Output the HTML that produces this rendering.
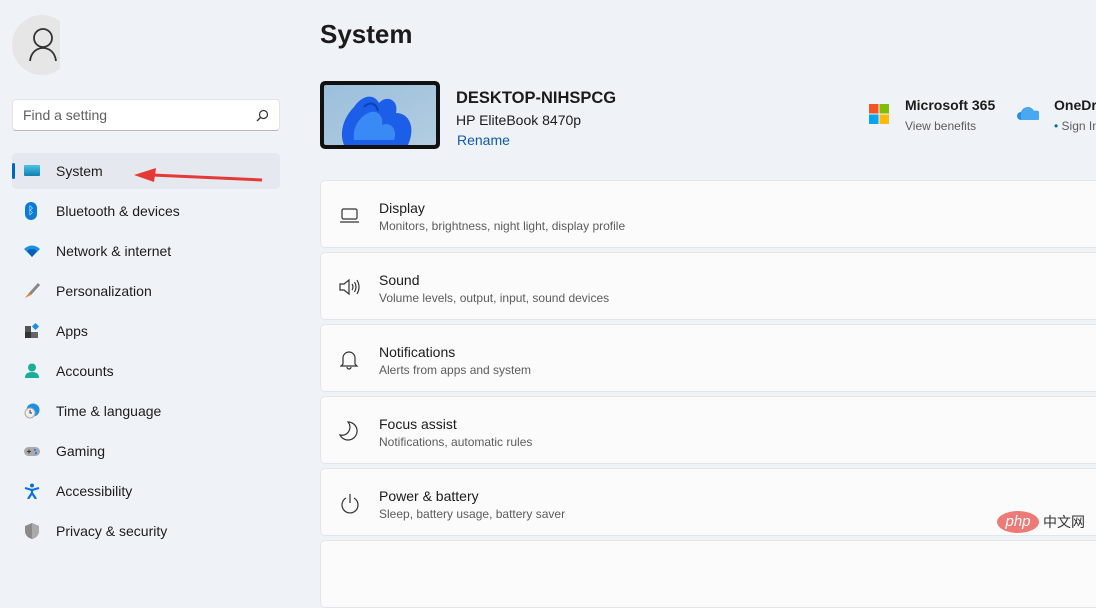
<!DOCTYPE html>
<html><head><meta charset="utf-8"><style>
*{margin:0;padding:0;box-sizing:border-box}
body{width:1096px;height:554px;overflow:hidden;background:#eff3f8;font-family:"Liberation Sans","Noto Sans CJK SC",sans-serif;color:#1b1b1b;position:relative}
.abs{position:absolute}
.avatar{left:12px;top:15px;width:48px;height:60px;overflow:hidden}
.avatar div{width:60px;height:60px;border-radius:50%;background:#e6e6e6}
.search{left:12px;top:99px;width:268px;height:32px;background:#fff;border:1px solid #e3e3e3;border-bottom-color:#b8b8b8;border-radius:4px;font-size:14px;color:#5f5f5f;padding:7px 10px}
.nav{left:12px;width:268px;height:36px;font-size:14px;color:#1b1b1b}
.nav span{position:absolute;left:44px;top:10px}
.nav .ic{position:absolute;left:12px;top:10px;width:16px;height:16px}
.sel{background:#e5e9ef;border-radius:5px}
.card{left:320px;width:800px;height:68px;background:#fbfbfc;border:1px solid #e3e5e8;border-radius:5px}
.card .t{position:absolute;left:58px;top:19px;font-size:14px;color:#1b1b1b}
.card .s{position:absolute;left:58px;top:38px;font-size:12px;color:#5c5c5c}
.card svg{position:absolute;left:18px;top:24px}
</style></head><body>
<div class="abs avatar"><div></div><svg class="abs" style="left:0;top:0" width="60" height="60"><circle cx="31" cy="23" r="9" fill="none" stroke="#333" stroke-width="1.8"/><path d="M18 46c1-9 7-13 13-13s12 4 13 13" fill="none" stroke="#333" stroke-width="1.8"/></svg></div>
<div class="abs search">Find a setting<svg class="abs" style="right:10px;top:9px" width="14" height="14"><circle cx="8.5" cy="5.5" r="4" fill="none" stroke="#333" stroke-width="1.2"/><path d="M5.5 8.5L2 12" stroke="#333" stroke-width="1.3"/></svg></div>

<div class="abs nav sel" style="top:153px"><div class="abs" style="left:0;top:10px;width:3px;height:16px;background:#0067c0;border-radius:2px"></div><div class="ic" style="top:12px;height:11px;background:linear-gradient(#4cc3e6,#0f7fae);border-radius:1px"></div><span>System</span></div>
<svg class="abs" style="left:130px;top:165px" width="135" height="20"><path d="M132 15L22 10" stroke="#e53935" stroke-width="3"/><path d="M4 10L26 3L24 17Z" fill="#e53935"/></svg>

<div class="abs nav" style="top:193px"><div class="ic" style="left:13px;width:12px;height:18px;top:9px;background:#0a7bd9;border-radius:6px;color:#fff;font-size:11px;text-align:center;line-height:18px">ᛒ</div><span>Bluetooth &amp; devices</span></div>
<div class="abs nav" style="top:233px"><svg class="ic" viewBox="0 0 16 16"><path d="M0 6Q8 -1 16 6L8 14Z" fill="#1a8fe3"/><path d="M3 8Q8 4 13 8L8 14Z" fill="#0a5fb5"/></svg><span>Network &amp; internet</span></div>
<div class="abs nav" style="top:273px"><svg class="ic" viewBox="0 0 16 16"><path d="M15 1L6 11" stroke="#888" stroke-width="3"/><path d="M5 10L1 15L7 12Z" fill="#f27a1a"/></svg><span>Personalization</span></div>
<div class="abs nav" style="top:313px"><svg class="ic" viewBox="0 0 16 16"><rect x="1" y="3" width="6" height="6" fill="#555"/><rect x="1" y="9" width="6" height="6" fill="#333"/><rect x="7" y="9" width="7" height="6" fill="#666"/><rect x="9" y="1" width="5" height="5" fill="#1a8fe3" transform="rotate(45 11.5 3.5)"/></svg><span>Apps</span></div>
<div class="abs nav" style="top:353px"><svg class="ic" viewBox="0 0 16 16"><circle cx="8" cy="4.5" r="4" fill="#1aad9a"/><path d="M1 15q0-6 7-6t7 6z" fill="#1aad9a"/></svg><span>Accounts</span></div>
<div class="abs nav" style="top:393px"><svg class="ic" viewBox="0 0 16 16"><circle cx="9" cy="7" r="6.5" fill="#1a8fe3"/><circle cx="6" cy="10" r="5" fill="#eee" stroke="#aaa"/><path d="M6 7v3h2" stroke="#333" fill="none"/></svg><span>Time &amp; language</span></div>
<div class="abs nav" style="top:433px"><svg class="ic" viewBox="0 0 16 16"><rect x="0" y="4" width="16" height="9" rx="4.5" fill="#aaa"/><path d="M3 8.5h4M5 6.5v4" stroke="#333"/><circle cx="11" cy="7" r="1" fill="#1a6fe3"/><circle cx="12" cy="10" r="1" fill="#1a6fe3"/></svg><span>Gaming</span></div>
<div class="abs nav" style="top:473px"><svg class="ic" viewBox="0 0 16 16"><circle cx="8" cy="2.5" r="2" fill="#0a74d6"/><path d="M1 5l7 2 7-2M8 7v3l-4 6M8 10l4 6" stroke="#0a74d6" stroke-width="2.2" fill="none"/></svg><span>Accessibility</span></div>
<div class="abs nav" style="top:513px"><svg class="ic" viewBox="0 0 16 16"><path d="M8 0L15 3v5c0 4-3 7-7 8C4 15 1 12 1 8V3z" fill="#8a8a8a"/><path d="M8 0L15 3v5c0 4-3 7-7 8z" fill="#aaa"/></svg><span>Privacy &amp; security</span></div>

<div class="abs" style="left:320px;top:19px;font-size:26px;font-weight:600">System</div>
<div class="abs" style="left:320px;top:81px;width:120px;height:68px;background:#111;border-radius:5px;padding:4px"><svg width="112" height="60" style="display:block;border-radius:2px"><defs><linearGradient id="bg" x1="0" y1="0" x2="1" y2="1"><stop offset="0" stop-color="#9bbfdc"/><stop offset="1" stop-color="#b3cde0"/></linearGradient></defs><rect width="112" height="60" fill="url(#bg)"/><path d="M20 60C14 45 22 30 30 22C38 10 50 8 55 18C62 10 75 14 72 28C85 28 92 42 84 60Z" fill="#1d5ee8"/><path d="M30 55C28 42 36 32 44 28C52 24 60 30 58 40C66 36 74 44 70 55Z" fill="#3a8af5"/><path d="M40 22C46 16 52 18 54 26" stroke="#0f3fb5" stroke-width="2" fill="none"/></svg></div>
<div class="abs" style="left:456px;top:89px;font-size:16.5px;font-weight:700">DESKTOP-NIHSPCG</div>
<div class="abs" style="left:456px;top:112px;font-size:14px">HP EliteBook 8470p</div>
<div class="abs" style="left:457px;top:132px;font-size:14px;color:#0f5ab0">Rename</div>

<svg class="abs" style="left:869px;top:104px" width="20" height="20"><rect width="9.5" height="9.5" fill="#f35325"/><rect x="10.5" width="9.5" height="9.5" fill="#81bc06"/><rect y="10.5" width="9.5" height="9.5" fill="#05a6f0"/><rect x="10.5" y="10.5" width="9.5" height="9.5" fill="#ffba08"/></svg>
<div class="abs" style="left:905px;top:97px;font-size:14px;font-weight:700">Microsoft 365</div>
<div class="abs" style="left:905px;top:119px;font-size:12px;color:#5c5c5c">View benefits</div>
<svg class="abs" style="left:1017px;top:106px" width="22" height="14"><path d="M4 14a4 4 0 0 1 0-8a7 7 0 0 1 13-1a5 5 0 0 1 1 9z" fill="#2a8ee0"/><path d="M4 9a7 7 0 0 1 13-4a4.5 4.5 0 0 1 4 9H4z" fill="#49a8ef"/></svg>
<div class="abs" style="left:1054px;top:97px;font-size:14px;font-weight:700;white-space:nowrap">OneDrive</div>
<div class="abs" style="left:1054px;top:119px;font-size:12px;color:#5c5c5c;white-space:nowrap"><span style="color:#0067c0">•</span> Sign In</div>

<div class="abs card" style="top:180px"><svg width="20" height="20"><rect x="3" y="4" width="15" height="10" rx="1.5" fill="none" stroke="#333" stroke-width="1.2"/><path d="M1 17h19" stroke="#333" stroke-width="1.2"/></svg><div class="t">Display</div><div class="s">Monitors, brightness, night light, display profile</div></div>
<div class="abs card" style="top:252px"><svg width="22" height="20"><path d="M1 7h4l5-4v14l-5-4H1z" fill="none" stroke="#333" stroke-width="1.2"/><path d="M13 7q2 3 0 6M15.5 5q3 5 0 10M18 3q4 7 0 14" fill="none" stroke="#333" stroke-width="1.2"/></svg><div class="t">Sound</div><div class="s">Volume levels, output, input, sound devices</div></div>
<div class="abs card" style="top:324px"><svg width="20" height="22"><path d="M4 15V9a6 6 0 0 1 12 0v6l2 2H2z" fill="none" stroke="#333" stroke-width="1.2"/><path d="M8 18a2 2 0 0 0 4 0" fill="none" stroke="#333" stroke-width="1.2"/></svg><div class="t">Notifications</div><div class="s">Alerts from apps and system</div></div>
<div class="abs card" style="top:396px"><svg width="20" height="22"><path d="M9 1a9 9 0 1 1-8 13a8 8 0 0 0 8-13z" fill="none" stroke="#333" stroke-width="1.2"/></svg><div class="t">Focus assist</div><div class="s">Notifications, automatic rules</div></div>
<div class="abs card" style="top:468px"><svg width="22" height="22"><path d="M7 5a8 8 0 1 0 8 0" fill="none" stroke="#333" stroke-width="1.2"/><path d="M11 1v9" stroke="#333" stroke-width="1.2"/></svg><div class="t">Power &amp; battery</div><div class="s">Sleep, battery usage, battery saver</div></div>
<div class="abs card" style="top:540px"></div>

<div class="abs" style="left:997px;top:511px;width:42px;height:22px;border-radius:50%;background:#ee7a77;color:#fff;font-style:italic;font-size:15px;text-align:center;line-height:21px">php</div>
<div class="abs" style="left:1043px;top:512px;font-size:14px;color:#333">中文网</div>
</body></html>
